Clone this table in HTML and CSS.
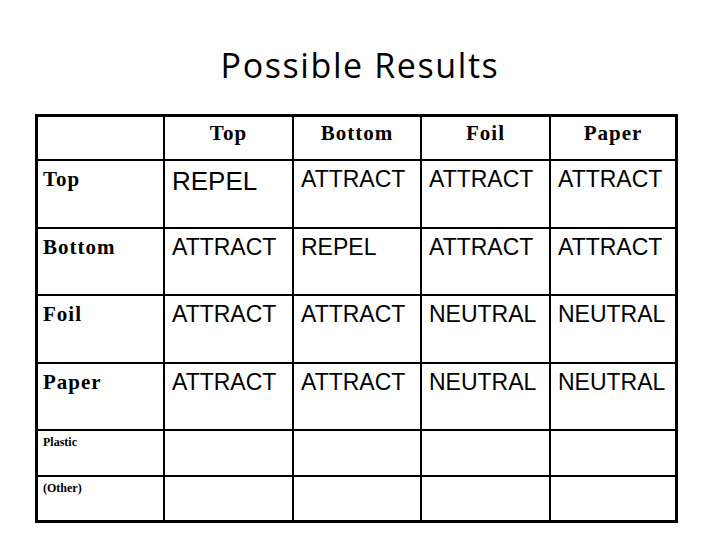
FILE: index.html
```html
<!DOCTYPE html>
<html lang="en">
<head>
<meta charset="utf-8">
<title>Possible Results</title>
<link rel="stylesheet" href="styles.css">
</head>
<body>
<main class="page">
  <h1 class="title">Possible Results</h1>
  <table class="results">
    <colgroup>
      <col class="c1"><col class="c2"><col class="c3"><col class="c4"><col class="c5">
    </colgroup>
    <thead>
      <tr class="row-head">
        <th class="corner"></th>
        <th class="col-head">Top</th>
        <th class="col-head">Bottom</th>
        <th class="col-head">Foil</th>
        <th class="col-head">Paper</th>
      </tr>
    </thead>
    <tbody>
      <tr class="row-main">
        <th class="row-head-cell">Top</th>
        <td class="big">REPEL</td>
        <td>ATTRACT</td>
        <td>ATTRACT</td>
        <td>ATTRACT</td>
      </tr>
      <tr class="row-main">
        <th class="row-head-cell">Bottom</th>
        <td>ATTRACT</td>
        <td>REPEL</td>
        <td>ATTRACT</td>
        <td>ATTRACT</td>
      </tr>
      <tr class="row-main">
        <th class="row-head-cell">Foil</th>
        <td>ATTRACT</td>
        <td>ATTRACT</td>
        <td>NEUTRAL</td>
        <td>NEUTRAL</td>
      </tr>
      <tr class="row-main">
        <th class="row-head-cell">Paper</th>
        <td>ATTRACT</td>
        <td>ATTRACT</td>
        <td>NEUTRAL</td>
        <td>NEUTRAL</td>
      </tr>
      <tr class="row-small">
        <th class="row-head-cell small">Plastic</th>
        <td></td><td></td><td></td><td></td>
      </tr>
      <tr class="row-small">
        <th class="row-head-cell small">(Other)</th>
        <td></td><td></td><td></td><td></td>
      </tr>
    </tbody>
  </table>
</main>
</body>
</html>
```
FILE: styles.css
```css
html, body {
  margin: 0;
  padding: 0;
  background: #ffffff;
  color: #000000;
}

.page {
  width: 720px;
  height: 540px;
  padding-top: 45px;
  box-sizing: border-box;
  display: flex;
  flex-direction: column;
}

.title {
  margin: 0;
  font-family: "Open Sans", "Noto Sans", sans-serif;
  font-weight: 400;
  font-size: 34px;
  line-height: 40px;
  letter-spacing: 1.6px;
  text-align: center;
  color: #000;
}

.results {
  margin: 29px 0 0 35px;
  width: 643px;
  table-layout: fixed;
  border-collapse: separate;
  border-spacing: 2px;
  border: 1px solid #000;
  background: #000;
}

.c1 { width: 125px; }
.c2 { width: 127px; }
.c3 { width: 126px; }
.c4 { width: 127px; }
.c5 { width: 124px; }

.results th,
.results td {
  background: #fff;
  padding: 0;
  vertical-align: top;
  white-space: nowrap;
  overflow: hidden;
}

.row-head { height: 42px; }
.row-main { height: 65.5px; }
.row-small { height: 43.5px; }

.results .col-head {
  font-family: "Liberation Serif", "Times New Roman", serif;
  font-weight: 700;
  font-size: 21px;
  line-height: 24px;
  letter-spacing: 1px;
  text-align: center;
  padding-top: 4px;
}

.results .row-head-cell {
  font-family: "Liberation Serif", "Times New Roman", serif;
  font-weight: 700;
  font-size: 21px;
  line-height: 24px;
  letter-spacing: 1px;
  text-align: left;
  padding: 6px 0 0 5px;
}

.results .row-head-cell.small {
  font-size: 12px;
  line-height: 14px;
  letter-spacing: 0;
  padding: 4px 0 0 5px;
}

.results td {
  font-family: "Liberation Sans", Arial, sans-serif;
  font-size: 23px;
  line-height: 26px;
  padding: 5px 0 0 7px;
}

.results td.big {
  font-size: 26px;
  line-height: 28px;
  padding-top: 6px;
}
```
